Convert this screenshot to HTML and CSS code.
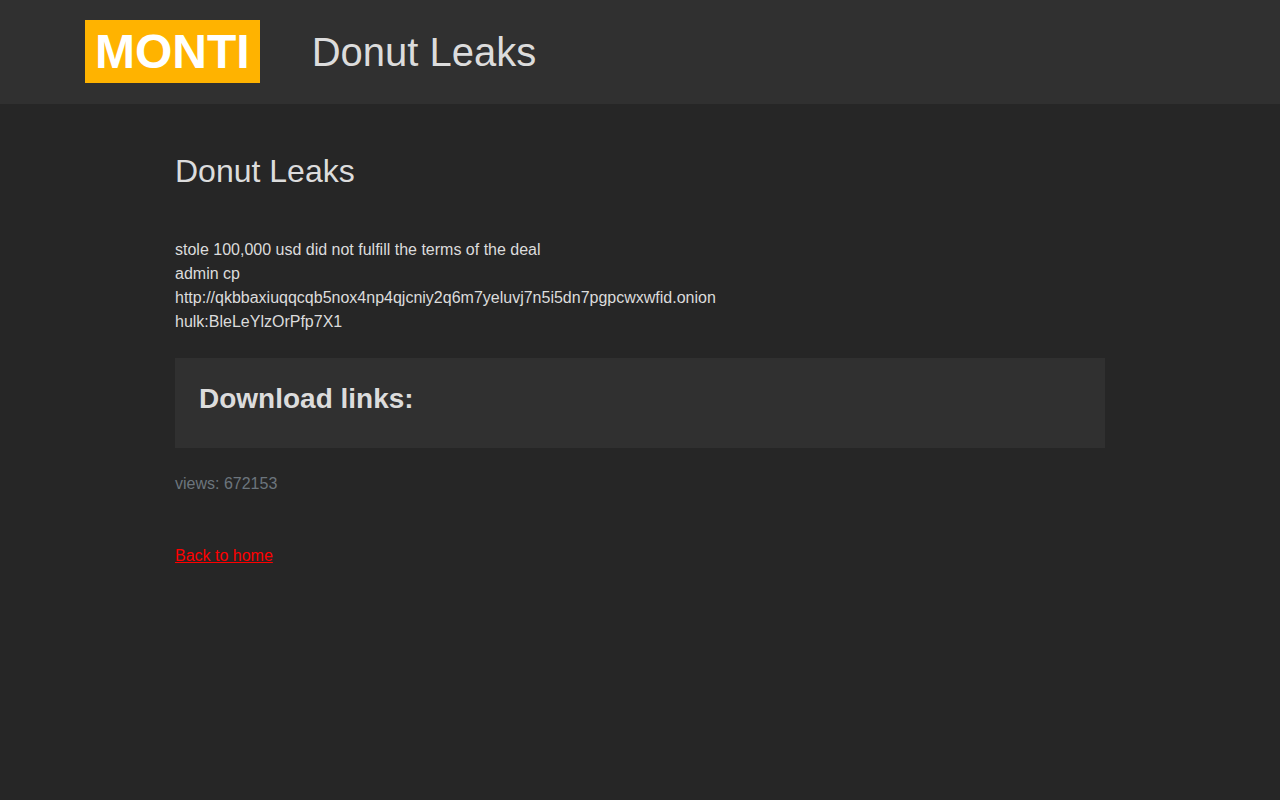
FILE: index.html
```html
<!DOCTYPE html>
<html lang="en">
<head>
<meta charset="utf-8">
<meta name="viewport" content="width=device-width, initial-scale=1">
<title>Donut Leaks</title>
<link rel="stylesheet" href="styles.css">
</head>
<body>
<header class="header">
  <div class="header-inner">
    <div class="logo">MONTI</div>
    <h1 class="header-title">Donut Leaks</h1>
  </div>
</header>
<main class="content">
  <h2 class="title">Donut Leaks</h2>
  <p class="text">stole 100,000 usd did not fulfill the terms of the deal<br>admin cp<br>http://qkbbaxiuqqcqb5nox4np4qjcniy2q6m7yeluvj7n5i5dn7pgpcwxwfid.onion<br>hulk:BleLeYlzOrPfp7X1</p>
  <section class="downloads">
    <h3 class="downloads-title">Download links:</h3>
  </section>
  <p class="views">views: 672153</p>
  <a class="back" href="#">Back to home</a>
</main>
</body>
</html>
```
FILE: styles.css
```css
* {
  box-sizing: border-box;
}

body {
  margin: 0;
  background: #262626;
  color: #dcdcdc;
  font: 16px/24px "Liberation Sans", Arial, sans-serif;
}

h1,
h2,
h3,
p {
  margin: 0;
}

.header {
  background: #303030;
  padding: 20px 0 21px;
}

.header-inner {
  display: flex;
  align-items: center;
  gap: 52px;
  max-width: 1140px;
  margin: 0 auto;
  padding: 0 15px;
}

.logo {
  padding: 0 10px;
  background: #ffb300;
  color: #fff;
  font-size: 48px;
  font-weight: 700;
  line-height: 63px;
}

.header-title {
  font-size: 40px;
  font-weight: 400;
  line-height: 48px;
}

.content {
  max-width: 960px;
  margin: 0 auto;
  padding: 48px 15px;
}

.title {
  margin-bottom: 48px;
  font-size: 32px;
  font-weight: 400;
  line-height: 38px;
}

.text {
  overflow-wrap: anywhere;
}

.downloads {
  margin: 24px 0;
  padding: 24px 24px 32px;
  background: #303030;
}

.downloads-title {
  font-size: 28px;
  font-weight: 700;
  line-height: 34px;
}

.views {
  margin-bottom: 48px;
  color: #6c757d;
}

.back {
  color: #f00;
  text-decoration: underline;
}
```
